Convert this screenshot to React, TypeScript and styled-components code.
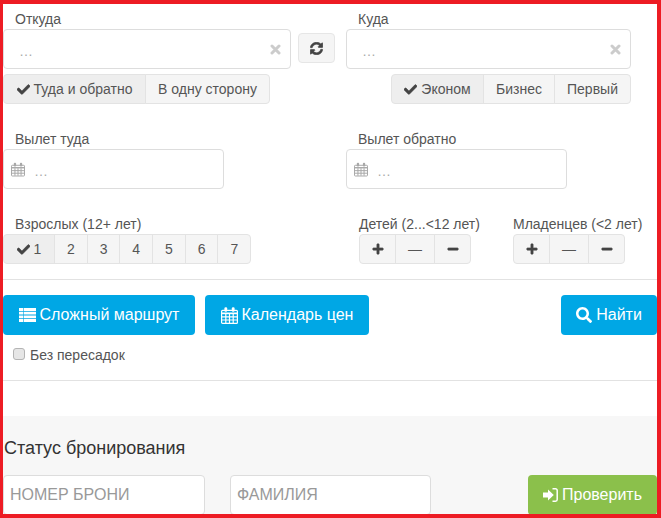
import React from "react";
import styled, { createGlobalStyle } from "styled-components";
import { FaCheck, FaMinus, FaPlus, FaSearch, FaSyncAlt } from "react-icons/fa";

const GlobalStyle = createGlobalStyle`
  html, body {
    margin: 0;
    padding: 0;
    background: #fff;
  }
  * {
    box-sizing: border-box;
  }
  body {
    font-family: "Liberation Sans", Arial, sans-serif;
    font-size: 14px;
    color: #555;
  }
`;

const Frame = styled.div`
  width: 661px;
  height: 518px;
  border: solid #ed1c24;
  border-width: 4px 4px 4px 3px;
  overflow: hidden;
  background: #fff;
`;

const Search = styled.form`
  padding-top: 5px;
`;

const Row = styled.div<{ $top?: number }>`
  display: flex;
  margin-top: ${(p) => p.$top ?? 0}px;
`;

const Column = styled.div<{ $width: number }>`
  flex: none;
  width: ${(p) => p.$width}px;
`;

const Label = styled.label<{ $inset?: number }>`
  display: block;
  height: 20px;
  line-height: 20px;
  padding-left: ${(p) => p.$inset ?? 12}px;
  color: #555;
  white-space: nowrap;
`;

const Field = styled.div<{ $width: number }>`
  display: flex;
  align-items: center;
  width: ${(p) => p.$width}px;
  height: 40px;
  padding: 0 9px 0 8px;
  background: #fff;
  border: 1px solid #ddd;
  border-radius: 4px;
`;

const DateField = styled(Field)`
  padding-left: 7px;
`;

const FieldInput = styled.input`
  flex: 1;
  min-width: 0;
  height: 100%;
  padding: 4px 0 0 7px;
  border: 0;
  outline: 0;
  background: transparent;
  font: inherit;
  color: #555;

  &::placeholder {
    color: #aaa;
    opacity: 1;
  }
`;

const DateSlot = styled.span`
  display: flex;
  flex: none;
  margin-right: 2px;
  color: #a8a8a8;
`;

const ClearSlot = styled.span`
  display: flex;
  flex: none;
  color: #ccc;
`;

const SwapButton = styled.button`
  flex: none;
  width: 37px;
  height: 30px;
  margin: 24px 11px 0 7px;
  padding: 0;
  display: flex;
  align-items: center;
  justify-content: center;
  background: #f5f5f5;
  border: 1px solid #e6e6e6;
  border-radius: 4px;
  color: #444;

  svg {
    stroke: currentColor;
    stroke-width: 24;
  }
`;

const Group = styled.div<{ $top?: number; $end?: boolean }>`
  display: flex;
  width: max-content;
  margin-top: ${(p) => p.$top ?? 0}px;
  margin-left: ${(p) => (p.$end ? "auto" : 0)};
`;

const Segment = styled.button<{ $width: number; $active?: boolean }>`
  display: flex;
  align-items: center;
  justify-content: center;
  gap: 4px;
  width: ${(p) => p.$width}px;
  height: 30px;
  padding: 0;
  margin-left: -1px;
  font: inherit;
  color: #555;
  background: ${(p) => (p.$active ? "#eee" : "#f5f5f5")};
  border: 1px solid #e3e3e3;
  white-space: nowrap;

  &:first-child {
    margin-left: 0;
    border-radius: 4px 0 0 4px;
  }
  &:last-child {
    border-radius: 0 4px 4px 0;
  }
  svg {
    color: #444;
    stroke: currentColor;
    stroke-width: 24;
  }
`;

const Rule = styled.hr<{ $top: number }>`
  height: 1px;
  margin: ${(p) => p.$top}px 0 0;
  border: 0;
  background: #e2e2e2;
`;

const Actions = styled.div`
  display: flex;
  gap: 10px;
  margin-top: 15px;
`;

const ActionButton = styled.button<{ $width: number; $push?: boolean; $green?: boolean }>`
  display: flex;
  align-items: center;
  justify-content: center;
  gap: 4px;
  flex: none;
  width: ${(p) => p.$width}px;
  height: 40px;
  padding: 0;
  margin-left: ${(p) => (p.$push ? "auto" : 0)};
  font: inherit;
  font-size: 16px;
  color: #fff;
  background: ${(p) => (p.$green ? "#8bc04b" : "#00a7e5")};
  border: 0;
  border-radius: 4px;
  white-space: nowrap;
`;

const Check = styled.label`
  display: flex;
  align-items: center;
  height: 20px;
  margin: 10px 0 0 10px;
  color: #555;
`;

const CheckBox = styled.input`
  appearance: none;
  flex: none;
  width: 12px;
  height: 12px;
  margin: 0 5px 3px 0;
  background: #e6e6e6;
  border: 1px solid #b4b4b4;
  border-radius: 3px;
`;

const Status = styled.section`
  margin-top: 35px;
  padding-top: 21px;
  height: 120px;
  background: #f7f7f7;
`;

const StatusTitle = styled.h4`
  margin: 0 0 0 1px;
  height: 22px;
  line-height: 22px;
  font-size: 18px;
  font-weight: 400;
  color: #333;
`;

const StatusRow = styled.div`
  display: flex;
  margin-top: 16px;
`;

const StatusInput = styled.input<{ $width: number; $gap: number }>`
  flex: none;
  width: ${(p) => p.$width}px;
  height: 40px;
  margin-right: ${(p) => p.$gap}px;
  padding: 0 6px;
  font: inherit;
  font-size: 16px;
  background: #fff;
  border: 1px solid #ddd;
  border-radius: 4px;

  &::placeholder {
    color: #999;
    opacity: 1;
  }
`;

const adults = [2, 3, 4, 5, 6, 7];

function CalendarIcon({ width, height }: { width: number; height: number }) {
  return (
    <svg width={width} height={height} viewBox="0 0 17 17" fill="none">
      <path
        d="M1.6 3.4h13.8a1 1 0 0 1 1 1v11a1 1 0 0 1-1 1H1.6a1 1 0 0 1-1-1v-11a1 1 0 0 1 1-1z"
        stroke="currentColor"
        strokeWidth="1.2"
      />
      <path d="M1 5.5h15v1.7H1z" fill="currentColor" />
      <path d="M4.8 7v9M8.5 7v9M12.2 7v9M1 9.9h15M1 13h15" stroke="currentColor" strokeWidth="1.2" />
      <rect x="3.4" y="0.2" width="2.8" height="4.6" rx="1.2" fill="currentColor" />
      <rect x="10.8" y="0.2" width="2.8" height="4.6" rx="1.2" fill="currentColor" />
    </svg>
  );
}

function RouteIcon() {
  return (
    <svg width="17" height="14" viewBox="0 0 17 14" fill="currentColor">
      <path d="M0 0h4v2.9H0zM4.6 0H17v2.9H4.6zM0 3.7h4v2.9H0zM4.6 3.7H17v2.9H4.6zM0 7.4h4v2.9H0zM4.6 7.4H17v2.9H4.6zM0 11.1h4V14H0zM4.6 11.1H17V14H4.6z" />
    </svg>
  );
}

function ClearIcon() {
  return (
    <svg width="11" height="11" viewBox="0 0 11 11" fill="none">
      <path d="M2 2l7 7M9 2l-7 7" stroke="currentColor" strokeWidth="3" strokeLinecap="round" />
    </svg>
  );
}

function SignInIcon() {
  return (
    <svg width="15" height="14" viewBox="0 0 15 14">
      <path d="M0 4.6h5V1.4L10.8 7 5 12.6V9.4H0z" fill="currentColor" />
      <path
        d="M9.5 0.8h3a1.7 1.7 0 0 1 1.7 1.7v9a1.7 1.7 0 0 1-1.7 1.7h-3"
        fill="none"
        stroke="currentColor"
        strokeWidth="1.5"
      />
    </svg>
  );
}

function Counter() {
  return (
    <Group>
      <Segment type="button" $width={37}>
        <FaPlus size={12} />
      </Segment>
      <Segment type="button" $width={40}>
        —
      </Segment>
      <Segment type="button" $width={37}>
        <FaMinus size={12} />
      </Segment>
    </Group>
  );
}

export default function App() {
  return (
    <>
      <GlobalStyle />
      <Frame>
        <Search>
          <Row>
            <Column $width={288}>
              <Label>Откуда</Label>
              <Field $width={288}>
                <FieldInput placeholder="…" />
                <ClearSlot>
                  <ClearIcon />
                </ClearSlot>
              </Field>
              <Group $top={5}>
                <Segment type="button" $width={143} $active>
                  <FaCheck size={13} />
                  Туда и обратно
                </Segment>
                <Segment type="button" $width={125}>
                  В одну сторону
                </Segment>
              </Group>
            </Column>
            <SwapButton type="button">
              <FaSyncAlt size={13} />
            </SwapButton>
            <Column $width={285}>
              <Label>Куда</Label>
              <Field $width={285}>
                <FieldInput placeholder="…" />
                <ClearSlot>
                  <ClearIcon />
                </ClearSlot>
              </Field>
              <Group $top={5} $end>
                <Segment type="button" $width={93} $active>
                  <FaCheck size={13} />
                  Эконом
                </Segment>
                <Segment type="button" $width={72}>
                  Бизнес
                </Segment>
                <Segment type="button" $width={77}>
                  Первый
                </Segment>
              </Group>
            </Column>
          </Row>

          <Row $top={25}>
            <Column $width={343}>
              <Label>Вылет туда</Label>
              <DateField $width={221}>
                <DateSlot>
                  <CalendarIcon width={14} height={15} />
                </DateSlot>
                <FieldInput placeholder="…" />
              </DateField>
            </Column>
            <Column $width={285}>
              <Label>Вылет обратно</Label>
              <DateField $width={221}>
                <DateSlot>
                  <CalendarIcon width={14} height={15} />
                </DateSlot>
                <FieldInput placeholder="…" />
              </DateField>
            </Column>
          </Row>

          <Row $top={25}>
            <Column $width={356}>
              <Label>Взрослых (12+ лет)</Label>
              <Group>
                <Segment type="button" $width={52} $active>
                  <FaCheck size={13} />1
                </Segment>
                {adults.map((n) => (
                  <Segment type="button" $width={33.7} key={n}>
                    {n}
                  </Segment>
                ))}
              </Group>
            </Column>
            <Column $width={154}>
              <Label $inset={0}>Детей (2...&lt;12 лет)</Label>
              <Counter />
            </Column>
            <Column $width={130}>
              <Label $inset={0}>Младенцев (&lt;2 лет)</Label>
              <Counter />
            </Column>
          </Row>

          <Rule $top={15} />

          <Actions>
            <ActionButton type="button" $width={192}>
              <RouteIcon />
              Сложный маршрут
            </ActionButton>
            <ActionButton type="button" $width={164}>
              <CalendarIcon width={17} height={17} />
              Календарь цен
            </ActionButton>
            <ActionButton type="submit" $width={96} $push>
              <FaSearch size={16} />
              Найти
            </ActionButton>
          </Actions>

          <Check>
            <CheckBox type="checkbox" />
            Без пересадок
          </Check>

          <Rule $top={15} />
        </Search>

        <Status>
          <StatusTitle>Статус бронирования</StatusTitle>
          <StatusRow>
            <StatusInput $width={202} $gap={25} placeholder="НОМЕР БРОНИ" />
            <StatusInput $width={201} $gap={0} placeholder="ФАМИЛИЯ" />
            <ActionButton type="button" $width={129} $push $green>
              <SignInIcon />
              Проверить
            </ActionButton>
          </StatusRow>
        </Status>
      </Frame>
    </>
  );
}
